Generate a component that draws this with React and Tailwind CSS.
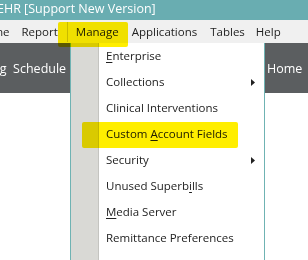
import { Fragment } from 'react';

const items = [
  { label: 'Enterprise', u: 0 },
  { label: 'Collections', sub: true },
  { label: 'Clinical Interventions' },
  { label: 'Custom Account Fields', u: 7 },
  { label: 'Security', sub: true },
  { label: 'Unused Superbills', u: 13 },
  { label: 'Media Server', u: 0 },
  { label: 'Remittance Preferences' },
];

function Label({ label, u }) {
  if (u === undefined) return label;
  return (
    <Fragment>
      {label.slice(0, u)}
      <span className="underline underline-offset-2">{label[u]}</span>
      {label.slice(u + 1)}
    </Fragment>
  );
}

export default function App() {
  return (
    <div className="relative w-[308px] h-[260px] overflow-hidden bg-white font-['Open_Sans',sans-serif] text-[11.5px] text-[#222]">
      {/* Title bar */}
      <div className="h-[20px] bg-[#69adb1] text-white text-[12.5px] leading-[17px] whitespace-nowrap -ml-[3px]">
        EHR [Support New Version]
      </div>

      {/* Menu bar */}
      <div className="h-[23px] bg-[#f0f0f0] flex items-center whitespace-nowrap -ml-[23px]">
        <span>Home</span>
        <span className="ml-[12px]">Report</span>
        <span className="ml-[9px] w-px h-[20px] bg-[#c9c9c9]" />
        <span className="ml-[8px]">Manage</span>
        <span className="ml-[13px]">Applications</span>
        <span className="ml-[13px]">Tables</span>
        <span className="ml-[11px]">Help</span>
      </div>

      {/* Body */}
      <div className="flex h-[217px]">
        <div className="w-[70px] h-[50px] bg-[#5b5e60] text-white text-[12.5px] flex items-center pt-[2px] whitespace-nowrap overflow-hidden">
          <span className="-ml-[11px]">ing&nbsp;&nbsp;Schedule</span>
        </div>

        <div className="w-[195px] flex border-l border-r border-[#6fb3b3] bg-white">
          <div className="w-[28px] bg-[#d9d9d5] border-r border-[#c4c4c0]" />
          <div className="flex-1 flex flex-col">
            {items.map((it) => (
              <div key={it.label} className="h-[26px] flex items-center pl-[7px] pr-[9px] whitespace-nowrap">
                <span className="flex-1"><Label label={it.label} u={it.u} /></span>
                {it.sub && (
                  <svg width="4" height="7" viewBox="0 0 4 7" className="shrink-0">
                    <path d="M0 0 L4 3.5 L0 7 Z" fill="#222" />
                  </svg>
                )}
              </div>
            ))}
          </div>
        </div>

        <div className="flex-1 h-[50px] bg-[#5b5e60] text-white text-[12.5px] flex items-center pt-[2px] whitespace-nowrap overflow-hidden pl-[2px]">
          Home&nbsp;&nbsp;T
        </div>
      </div>

      {/* Marker highlights */}
      <div className="absolute left-[58px] top-[22px] w-[70px] h-[25px] bg-[#ffee00] mix-blend-multiply rounded-[2px]" />
      <div className="absolute left-[82px] top-[122px] w-[156px] h-[26px] bg-[#ffee00] mix-blend-multiply rounded-[2px]" />
    </div>
  );
}
